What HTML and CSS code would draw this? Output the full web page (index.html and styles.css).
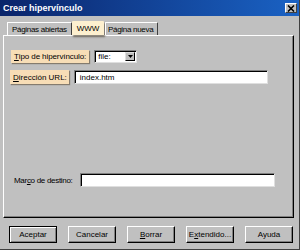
FILE: index.html
```html
<!DOCTYPE html>
<html lang="es">
<head>
    <meta charset="UTF-8">
    <title>Crear hipervínculo</title>
    <link rel="stylesheet" href="styles.css">
</head>
<body>
    <div class="window">
        <div class="titlebar">
            <span class="title">Crear hipervínculo</span>
            <span class="close">
                <svg width="8" height="7" viewBox="0 0 8 7"><path d="M1 0.5 L7 6.5 M7 0.5 L1 6.5" stroke="#000" stroke-width="1.6"/></svg>
            </span>
        </div>

        <div class="tabs">
            <div class="tab tab-open">Páginas abiertas</div>
            <div class="tab tab-active">WWW</div>
            <div class="tab tab-new">Página nueva</div>
        </div>

        <div class="panel">
            <div class="row row-type">
                <span class="hl"><u>T</u>ipo de hipervínculo:</span>
                <div class="select">
                    <span class="select-value">file:</span>
                    <span class="select-btn">
                        <svg width="5" height="3" viewBox="0 0 5 3"><path d="M0 0 H5 L2.5 3 Z" fill="#000"/></svg>
                    </span>
                </div>
            </div>
            <div class="row row-url">
                <span class="hl"><u>D</u>irección URL:</span>
                <div class="field field-url">index.htm</div>
            </div>
            <div class="row row-frame">
                <span class="label">Mar<u>c</u>o de destino:</span>
                <div class="field field-frame"></div>
            </div>
        </div>

        <div class="buttons">
            <button class="btn default">Aceptar</button>
            <button class="btn">Cancelar</button>
            <button class="btn"><u>B</u>orrar</button>
            <button class="btn">E<u>x</u>tendido...</button>
            <button class="btn">Ayuda</button>
        </div>
    </div>
</body>
</html>
```

FILE: styles.css
```css
body {
    margin: 0;
    padding: 0;
    font-family: "Liberation Sans", Arial, sans-serif;
    font-size: 8px;
    color: #000;
    background: #c0c0c0;
}
u {
    text-decoration: underline;
    text-underline-offset: 1px;
}
.window {
    width: 299px;
    height: 249px;
    background: #c0c0c0;
    border-right: 1px solid #404040;
    border-bottom: 1px solid #404040;
    display: flex;
    flex-direction: column;
}
.titlebar {
    height: 16px;
    background: linear-gradient(to right, #0a246a, #1a62c4);
    display: flex;
    align-items: center;
    justify-content: space-between;
    padding: 0 2px 0 3px;
}
.title {
    color: #fff;
    font-weight: bold;
    font-size: 9px;
}
.close {
    width: 10px;
    height: 8px;
    background: #c0c0c0;
    border-top: 1px solid #fff;
    border-left: 1px solid #fff;
    border-right: 1px solid #404040;
    border-bottom: 1px solid #404040;
    display: flex;
    align-items: center;
    justify-content: center;
}
.tabs {
    display: flex;
    height: 14px;
    margin-top: 5px;
    padding-left: 7px;
    position: relative;
    z-index: 1;
}
.tab {
    height: 13px;
    margin-top: 1px;
    border-top: 1px solid #fff;
    border-left: 1px solid #fff;
    border-right: 1px solid #404040;
    border-radius: 1px 1px 0 0;
    display: flex;
    align-items: center;
    padding-left: 4px;
    box-sizing: border-box;
    white-space: nowrap;
    overflow: hidden;
    letter-spacing: -0.3px;
}
.tab-open {
    width: 65px;
}
.tab-active {
    width: 32px;
    height: 14px;
    margin-top: 0;
    justify-content: center;
    padding-left: 0;
    background: #fdf0cf;
    border: none;
    letter-spacing: 0;
    box-shadow: 1px 2px 2px rgba(40, 30, 10, 0.55);
}
.tab-new {
    width: 53px;
    margin-left: 1px;
    padding-left: 2px;
}
.panel {
    height: 183px;
    width: 291px;
    margin-left: 3px;
    box-sizing: border-box;
    border-top: 1px solid #fff;
    border-left: 1px solid #fff;
    border-right: 1px solid #000;
    border-bottom: 1px solid #000;
    box-shadow: inset -1px -1px 0 #808080;
    display: flex;
    flex-direction: column;
}
.row {
    display: flex;
    align-items: center;
}
.row-type {
    margin-top: 14px;
    padding-left: 7px;
    height: 13px;
}
.row-url {
    margin-top: 7px;
    padding-left: 6px;
    height: 14px;
}
.row-frame {
    margin-top: 89px;
    padding-left: 10px;
    height: 14px;
}
.label {
    width: 66px;
    white-space: nowrap;
    letter-spacing: -0.3px;
}
.hl {
    background: #f7ddb6;
    height: 13px;
    display: flex;
    align-items: center;
    padding: 0 3px;
    white-space: nowrap;
    box-shadow: 1px 1px 1px rgba(60, 40, 10, 0.45);
}
.row-type .hl {
    letter-spacing: -0.1px;
}
.row-url .hl {
    height: 14px;
    padding: 0 2px 0 3px;
}
.select {
    margin-left: 5px;
    width: 43px;
    height: 13px;
    box-sizing: border-box;
    background: #fff;
    border-top: 1px solid #808080;
    border-left: 1px solid #808080;
    border-right: 1px solid #dfdfdf;
    border-bottom: 1px solid #dfdfdf;
    box-shadow: inset 1px 1px 0 #000;
    display: flex;
    align-items: center;
    justify-content: space-between;
}
.select-value {
    padding-left: 3px;
}
.select-btn {
    width: 10px;
    height: 9px;
    margin-right: 1px;
    background: #c0c0c0;
    border-top: 1px solid #dfdfdf;
    border-left: 1px solid #dfdfdf;
    border-right: 1px solid #000;
    border-bottom: 1px solid #000;
    box-sizing: border-box;
    display: flex;
    align-items: center;
    justify-content: center;
}
.field {
    height: 14px;
    box-sizing: border-box;
    background: #fff;
    border-top: 1px solid #808080;
    border-left: 1px solid #808080;
    border-right: 1px solid #dfdfdf;
    border-bottom: 1px solid #dfdfdf;
    box-shadow: inset 1px 1px 0 #000;
    display: flex;
    align-items: center;
    padding-left: 5px;
}
.field-url {
    margin-left: 5px;
    width: 194px;
}
.field-frame {
    width: 195px;
}
.buttons {
    display: flex;
    gap: 11px;
    margin-top: 8px;
    padding-left: 9px;
}
.btn {
    width: 48px;
    height: 17px;
    padding: 0;
    margin: 0;
    font-family: "Liberation Sans", Arial, sans-serif;
    font-size: 8px;
    color: #000;
    background: #c0c0c0;
    border-top: 1px solid #fff;
    border-left: 1px solid #fff;
    border-right: 1px solid #000;
    border-bottom: 1px solid #000;
    box-shadow: inset -1px -1px 0 #808080;
}
.btn.default {
    outline: 1px solid #000;
    outline-offset: -1px;
    border-top-color: #000;
    border-left-color: #000;
    box-shadow: inset 1px 1px 0 #fff, inset -1px -1px 0 #808080;
}
```
